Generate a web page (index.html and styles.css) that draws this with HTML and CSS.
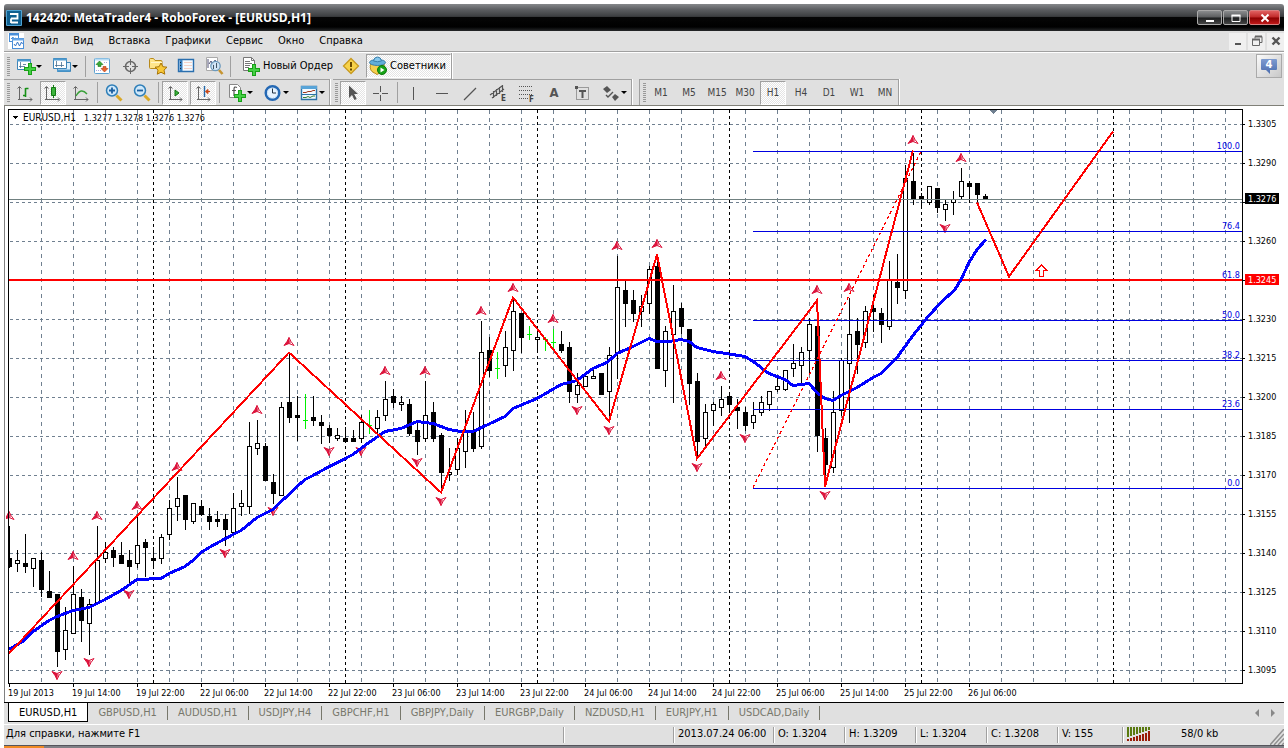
FILE: index.html
```html
<!DOCTYPE html>
<html lang="ru">
<head>
<meta charset="utf-8">
<title>142420: MetaTrader4 - RoboForex - [EURUSD,H1]</title>
<link rel="stylesheet" href="styles.css">
</head>
<body>
<div class="window">
  <header class="titlebar">
    <svg class="app-logo" width="16" height="16" viewBox="0 0 16 16"><rect width="16" height="16" rx="1" fill="#4fa3d3"/><rect x="1" y="1" width="14" height="14" fill="#0f5f8f"/><path d="M5 13V8.500M4 4h7.500v4.500H5M5 12.500h7" fill="none" stroke="#fff" stroke-width="1.800"/></svg>
    <h1>142420: MetaTrader4 - RoboForex - [EURUSD,H1]</h1>
    <div class="window-buttons">
      <button aria-label="Свернуть"><svg width="12" height="10"><path d="M2 8h8" stroke="#fff" stroke-width="2"/></svg></button>
      <button aria-label="Развернуть"><svg width="12" height="10"><path d="M2 2.500h8v6h-8z" fill="none" stroke="#fff"/><path d="M1.500 2.500h9" stroke="#fff" stroke-width="2"/></svg></button>
      <button class="close" aria-label="Закрыть"><svg width="12" height="10"><path d="M2.500 1.500l7 7m0-7l-7 7" stroke="#fff" stroke-width="2"/></svg></button>
    </div>
  </header>

  <nav class="menubar">
    <svg class="doc-icon" width="16" height="16" viewBox="0 0 16 16"><rect width="16" height="16" fill="#fff"/><rect x="1.500" y=".5" width="9" height="8" fill="#fff" stroke="#4a8fd8"/><path d="M1 1.500h10" stroke="#4a8fd8" stroke-width="2"/><path d="M3 6l2-2 1 2 2-1" fill="none" stroke="#4a8fd8"/><rect x="4.500" y="5.500" width="11" height="10" fill="#fff" stroke="#4a8fd8"/><path d="M4 6.500h12" stroke="#6aa8e8" stroke-width="2"/><path d="M6 11l1.500 2 2-4 2 4 2-4 1 2" fill="none" stroke="#3476c8"/></svg>
    <button>Файл</button><button>Вид</button><button>Вставка</button><button>Графики</button><button>Сервис</button><button>Окно</button><button>Справка</button>
    <div class="mdi-buttons">
      <button aria-label="Свернуть график"><svg width="12" height="12"><path d="M3 9h6" stroke="#555" stroke-width="2"/></svg></button>
      <button aria-label="Восстановить график"><svg width="12" height="12"><path d="M4 3.500V1.500h7v6h-2" fill="none" stroke="#666"/><path d="M4 1.500h7M1 4.500h8" stroke="#666" stroke-width="2"/><path d="M1.500 4.500h7v6h-7z" fill="none" stroke="#666"/></svg></button>
      <button aria-label="Закрыть график"><svg width="12" height="12"><path d="M2.500 2.500l7 7m0-7l-7 7" stroke="#555" stroke-width="2.400"/></svg></button>
    </div>
  </nav>

  <div class="toolbars">
    <div class="toolrow">
      <div class="group">
        <span class="grip"></span>
        <button class="drop" aria-label="Новый график"><svg width="20" height="20"><path d="M1.500 3.500h13v10h-13z" fill="#fff" stroke="#3d85b8"/><path d="M1 4.500h14" stroke="#4f9bd0" stroke-width="2"/><path d="M4.500 6v6M3 10.500h6M7 8.500h3" stroke="#456f90" stroke-width=".8"/><path d="M12 7h4v4h4v4h-4v4h-4v-4H8v-4h4z" fill="#17a017"/><path d="M13 8h2v4h4v2h-4v4h-2v-4H9v-2h4z" fill="#45cf45"/></svg><i></i></button>
        <button class="drop" aria-label="Профили"><svg width="20" height="20"><path d="M5.500 6.500h13v9h-13z" fill="#dceffc" stroke="#3d85b8"/><path d="M1.500 2.500h13v10h-13z" fill="#fff" stroke="#3d85b8"/><path d="M1 3.500h14" stroke="#4f9bd0" stroke-width="2"/><path d="M4.500 5v6M3 9.500h9M9.500 6v5" stroke="#456f90" stroke-width=".8"/><path d="M5 14.500h13" stroke="#4f9bd0" stroke-width="2"/></svg><i></i></button>
        <span class="sep"></span>
        <button aria-label="Обзор рынка"><svg width="20" height="20"><rect x="2.500" y="2.500" width="15" height="15" rx="1" fill="#fff" stroke="#5aa0d0"/><path d="M3 3.500h14" stroke="#b8dcf4" stroke-width="2"/><path d="M7.500 5l3.500 3.500H9v2H6v-2H4z" fill="#3aa83a" stroke="#187818" stroke-width=".6"/><path d="M12.500 16l3.500-3.500h-2v-2h-3v2H9z" fill="#e8642e" stroke="#b03a10" stroke-width=".6"/><path d="M4 14.500h5M12 6.500h4" stroke="#aad" stroke-dasharray="1 1"/></svg></button>
        <button aria-label="Окно данных"><svg width="20" height="20"><circle cx="10.500" cy="10.500" r="5" fill="none" stroke="#686868" stroke-width="1.600"/><path d="M10.500 3v6M10.500 12v6M3 10.500h6M12 10.500h6" stroke="#686868"/></svg></button>
        <button aria-label="Навигатор"><svg width="20" height="20"><path d="M1.500 3.500q0-1 1-1h3l1.500 2h6q1 0 1 1v6q0 1-1 1h-10.500q-1 0-1-1z" fill="#ffe58a" stroke="#b88a1c"/><path d="M3 6.500h11" stroke="#fff6cc"/><path d="M13 7l1.900 3.700 4.100.5-3 2.900.8 4.100-3.800-2-3.700 2 .7-4.100-3-2.900 4.100-.5z" fill="#f8c838" stroke="#a87404"/></svg></button>
        <button aria-label="Терминал"><svg width="20" height="20"><path d="M2.500 3.500h15v12h-15z" fill="#f4faff" stroke="#2a6fae" stroke-width="1.400"/><path d="M5 4v11" stroke="#377fc0" stroke-width="3"/><path d="M4.500 6v9" stroke="#123" stroke-dasharray="1 2"/><path d="M8 6.500h8M8 9.500h8M8 12.500h8" stroke="#f0c0b0" stroke-width=".7"/></svg></button>
        <button aria-label="Тестер стратегий"><svg width="20" height="20"><path d="M2.500 1.500h11v13h-11z" fill="#fff" stroke="#aaa"/><path d="M4 3v9M5 8l2-3 2 4 2-5 2 3" fill="none" stroke="#557"/><circle cx="11.500" cy="10" r="4.700" fill="#cfe6f7" fill-opacity=".9" stroke="#6b99bc" stroke-width="1.300"/><path d="M9.500 9v4M12.500 7v5" stroke="#456"/><path d="M15 14l3.500 4" stroke="#c69532" stroke-width="2.600"/></svg></button>
        <span class="sep"></span>
        <button class="text-btn"><svg width="20" height="20"><path d="M2.500 1.500h8l3 3v10h-11z" fill="#fff" stroke="#777"/><path d="M10.500 1.500v3h3M4 5.500h5M4 7.500h7M4 9.500h5M4 11.500h4" fill="none" stroke="#777"/><path d="M11 8h4v4h4v4h-4v4h-4v-4H7v-4h4z" fill="#17a017"/><path d="M12 9h2v4h4v2h-4v4h-2v-4H8v-2h4z" fill="#45cf45"/></svg>Новый Ордер</button>
        <button aria-label="MetaEditor"><svg width="20" height="20"><path d="M10 2.500l7.500 7.500-7.500 7.500-7.500-7.500z" fill="#f7d24a" stroke="#c89a20" stroke-width="1.300"/><path d="M10 6v5M10 12.500v2" stroke="#6a4a00" stroke-width="2"/></svg></button>
        <button class="text-btn pressed experts"><svg width="20" height="20"><path d="M3 7h13q1 6-3 9l-4 2.500-5-3q-3-3-1-8.500z" fill="#f5cf4e" stroke="#b88a1c"/><ellipse cx="9.500" cy="6.500" rx="8" ry="3" fill="#62aed9" stroke="#3a80ac"/><path d="M5.500 5q.5-4 4-4t4 4q-4 1.500-8 0z" fill="#85c7ec" stroke="#3a80ac"/><circle cx="14" cy="14" r="4.500" fill="#18a318" stroke="#0a7a0a"/><path d="M12.500 11.500v5l4-2.500z" fill="#fff"/></svg>Советники</button>
      </div>
      <button class="notice" aria-label="Уведомления"><svg width="20" height="20"><defs><linearGradient id="bub" x2="0" y2="1"><stop stop-color="#7e9bd0"/><stop offset="1" stop-color="#4a6cae"/></linearGradient></defs><path d="M3 3h14q1 0 1 1v9q0 1-1 1h-6v4l-4-4H3q-1 0-1-1V4q0-1 1-1z" fill="url(#bub)"/><text x="10" y="12" class="notice-num">4</text></svg></button>
    </div>

    <div class="toolrow">
      <div class="group lined">
        <span class="grip"></span>
        <button aria-label="Бары"><svg width="20" height="20"><path d="M4.500 16V4M3 16.500h14M2.500 5.500l2-2 2 2M15 14.500l2 2-2 2" fill="none" stroke="#666"/><path d="M10.500 5v9M10.500 5.500h3M8 12.500h2.500" stroke="#169016" stroke-width="1.600" fill="none"/></svg></button>
        <button class="pressed" aria-label="Свечи"><svg width="20" height="20"><path d="M3.500 16V4M2 16.500h14M1.500 5.500l2-2 2 2M15 14.500l2 2-2 2" fill="none" stroke="#666"/><path d="M10.500 2v13" stroke="#168016"/><path d="M8.500 4.500h4v8h-4z" fill="#3cb43c" stroke="#127812"/></svg></button>
        <button aria-label="Линия"><svg width="20" height="20"><path d="M4.500 16V4M3 16.500h14M2.500 5.500l2-2 2 2M15 14.500l2 2-2 2" fill="none" stroke="#666"/><path d="M5 13q5-9 11-2" fill="none" stroke="#38a038" stroke-width="1.400"/></svg></button>
        <span class="sep"></span>
        <button aria-label="Увеличить"><svg width="20" height="20"><path d="M12.500 12.500l5 5" stroke="#d9a828" stroke-width="3"/><circle cx="8" cy="7.500" r="5.500" fill="#cfe8fa" stroke="#2f7fb8" stroke-width="1.500"/><path d="M5 7.500h6M8 4.500v6" stroke="#1b5fa0" stroke-width="1.800"/></svg></button>
        <button aria-label="Уменьшить"><svg width="20" height="20"><path d="M12.500 12.500l5 5" stroke="#d9a828" stroke-width="3"/><circle cx="8" cy="7.500" r="5.500" fill="#cfe8fa" stroke="#2f7fb8" stroke-width="1.500"/><path d="M5 7.500h6" stroke="#1b5fa0" stroke-width="1.800"/></svg></button>
        <span class="sep"></span>
        <button class="pressed" aria-label="Автопрокрутка"><svg width="20" height="20"><path d="M5.500 16V4M4 16.500h13M3.500 5.500l2-2 2 2M15 14.500l2 2-2 2" fill="none" stroke="#666"/><path d="M10 7v6l4-3z" fill="#3ab83a" stroke="#107010"/></svg></button>
        <button class="pressed" aria-label="Сдвиг графика"><svg width="20" height="20"><path d="M5.500 16V4M4 16.500h13M3.500 5.500l2-2 2 2M15 14.500l2 2-2 2" fill="none" stroke="#666"/><path d="M11.500 3v11" stroke="#2468a8" stroke-width="1.400"/><path d="M17 8.500h-3M12.500 8.500l2.500-2v4z" fill="#c84818" stroke="#c84818"/></svg></button>
        <span class="sep"></span>
        <button class="drop" aria-label="Индикаторы"><svg width="20" height="20"><path d="M2.500 1.500h8l3 3v10h-11z" fill="#fff" stroke="#888"/><path d="M10 4.500q-3-1.500-3 1.500v7M5 7.500h4" fill="none" stroke="#555" stroke-width="1.200"/><path d="M11 7h4v4h4v4h-4v4h-4v-4H7v-4h4z" fill="#17a017"/><path d="M12 8h2v4h4v2h-4v4h-2v-4H8v-2h4z" fill="#45cf45"/></svg><i></i></button>
        <button class="drop" aria-label="Периоды"><svg width="20" height="20"><circle cx="9.500" cy="10" r="6.800" fill="#e6f3ff" stroke="#2468b4" stroke-width="2.400"/><circle cx="9.500" cy="10" r="5" fill="none" stroke="#a8cef0" stroke-dasharray="1 2"/><path d="M9.500 5.500V10H13" fill="none" stroke="#234"/></svg><i></i></button>
        <button class="drop" aria-label="Шаблоны"><svg width="20" height="20"><path d="M2.500 3.500h15v13h-15z" fill="#f4faff" stroke="#2c74a8" stroke-width="1.400"/><path d="M2 4.500h16" stroke="#58a4d8" stroke-width="3"/><path d="M2 11.500h16" stroke="#2c74a8"/><path d="M4 9.500h3l2-1h3l2-1h2" fill="none" stroke="#a03a20"/><path d="M4 14.500h3l2-1 2 1 3-1.500h2" fill="none" stroke="#338033"/></svg><i></i></button>
      </div>
      <div class="group lined">
        <span class="grip"></span>
        <button class="pressed" aria-label="Курсор"><svg width="20" height="20"><path d="M6 2.500v12.500l3-3 2.500 5 2.200-1-2.500-5H15z" fill="#555"/></svg></button>
        <button aria-label="Перекрестие"><svg width="20" height="20"><path d="M9.500 3v6M9.500 12v6M2 10.500h6M11 10.500h6" stroke="#555"/></svg></button>
        <span class="sep"></span>
        <button aria-label="Вертикальная линия"><svg width="20" height="20"><path d="M9.500 4v13" stroke="#555"/></svg></button>
        <button aria-label="Горизонтальная линия"><svg width="20" height="20"><path d="M4 10.500h12" stroke="#555"/></svg></button>
        <button aria-label="Трендовая линия"><svg width="20" height="20"><path d="M4 17L16 5" stroke="#555" stroke-width="1.200"/></svg></button>
        <button aria-label="Равноудаленный канал"><svg width="20" height="20"><path d="M2 12L14 3M4 15L16 6M5.500 8v7M8.500 6v7M11.500 4v7M14.500 2v7" stroke="#555" stroke-width="1.200"/><text x="13" y="18" class="glyph">E</text></svg></button>
        <button aria-label="Линии Фибоначчи"><svg width="20" height="20"><path d="M3 3.500h14M3 7.500h14M3 11.500h14M3 15.500h9" stroke="#555" stroke-dasharray="1 1"/><text x="13" y="19" class="glyph">F</text></svg></button>
        <button class="letter">A</button>
        <button aria-label="Текстовая метка"><svg width="20" height="20"><path d="M4.500 4.500h12v12h-12z" fill="none" stroke="#555" stroke-dasharray="1 1"/><path d="M3 3h3v3H3zM7 7h7v2h-2.500v6h-2V9H7z" fill="#555"/></svg></button>
        <button class="drop" aria-label="Стрелки"><svg width="20" height="20"><path d="M6 3l4 4-4 3-4-4zM14 11l4 3-4 4-3-4z" fill="#555"/><path d="M5 12l2 2 5-5" fill="none" stroke="#555" stroke-width="1.400"/></svg><i></i></button>
      </div>
      <div class="group lined periods">
        <span class="grip"></span>
        <button>M1</button><button>M5</button><button>M15</button><button>M30</button><button class="pressed">H1</button><button>H4</button><button>D1</button><button>W1</button><button>MN</button>
      </div>
    </div>
  </div>

  <main class="chart-frame">
    <svg id="chart" class="chart" viewBox="6 108 1276 594" role="img" aria-label="EURUSD,H1"></svg>
  </main>

  <nav class="tabs">
    <a href="#eurusd" class="active">EURUSD,H1</a><a href="#gbpusd">GBPUSD,H1</a><a href="#audusd">AUDUSD,H1</a><a href="#usdjpy">USDJPY,H4</a><a href="#gbpchf">GBPCHF,H1</a><a href="#gbpjpy">GBPJPY,Daily</a><a href="#eurgbp">EURGBP,Daily</a><a href="#nzdusd">NZDUSD,H1</a><a href="#eurjpy">EURJPY,H1</a><a href="#usdcad">USDCAD,Daily</a>
    <div class="tab-scroll">
      <button aria-label="Назад"><svg width="6" height="8"><path d="M5 0v8L1 4z" fill="#888"/></svg></button>
      <button aria-label="Вперед"><svg width="6" height="8"><path d="M1 0v8l4-4z" fill="#888"/></svg></button>
    </div>
  </nav>

  <footer class="status">
    <span class="help">Для справки, нажмите F1</span>
    <span class="profile"></span>
    <span class="date">2013.07.24 06:00</span>
    <span>O: 1.3204</span><span>H: 1.3209</span><span>L: 1.3204</span><span>C: 1.3208</span><span class="volume">V: 155</span>
    <span class="link"><svg width="24" height="14" viewBox="0 0 24 14"><path d="M1 0v10M4 0v9M7 0v8M10 0v7M13 0v6M16 0v5M19 0v4M22 0v3" stroke="#5a7a10" stroke-width="2"/><path d="M1 12v2M4 11v3M7 10v4M10 9v5M13 8v6M16 7v7M19 6v8M22 4v10" stroke="#9a1c08" stroke-width="2"/></svg>58/0 kb</span>
    <svg class="resize" width="14" height="16"><path d="M0 16L14 0M4 16L14 5M8 16L14 9.500M12 16l2-2" stroke="#909090" stroke-width="1.500"/></svg>
  </footer>
  <div class="taskbar"><span></span></div>
</div>
<script src="chart.js"></script>
</body>
</html>
```
FILE: styles.css
```css
* { box-sizing: border-box; }
body {
  margin: 0;
  background: #fff;
  color: #000;
  font: 11px/14px "DejaVu Sans Condensed", "DejaVu Sans", sans-serif;
}
button {
  margin: 0;
  padding: 0;
  border: 0;
  background: none;
  color: inherit;
  font: inherit;
}
svg { display: block; flex: none; }
.window {
  display: flex;
  flex-direction: column;
  min-height: 100vh;
  padding: 4px 4px 0;
}

.titlebar {
  display: flex;
  align-items: center;
  height: 27px;
  padding: 0 4px 0 2px;
  gap: 4px;
  border-radius: 3px 3px 0 0;
  background: linear-gradient(#85878a 0, #5d5f62 20%, #3c3e40 46%, #060606 50%, #000 85%, #26282a 100%);
}
.titlebar h1 {
  margin: 0;
  color: #fff;
  font: bold 12px/16px "Open Sans", "Noto Sans", sans-serif;
}
.window-buttons { display: flex; gap: 1px; margin-left: auto; }
.window-buttons button {
  display: flex;
  align-items: center;
  justify-content: center;
  width: 25px;
  height: 15px;
  border: 1px solid #aaa;
  border-radius: 2px;
  background: linear-gradient(#8a8c8e 0, #5b5d5f 48%, #1d1f20 52%, #444 100%);
}
.window-buttons .close {
  width: 31px;
  border-color: #d98080;
  background: linear-gradient(#e06060 0, #c02828 48%, #8a0000 52%, #c01818 100%);
}

.menubar {
  display: flex;
  align-items: center;
  height: 21px;
  padding-left: 4px;
  border-bottom: 1px solid #a0a0a0;
  background: #e0e0e0;
}
.menubar > button { padding: 0 8px 0 7px; }
.mdi-buttons { display: flex; gap: 2px; margin-left: auto; }
.mdi-buttons button {
  display: flex;
  align-items: center;
  justify-content: center;
  width: 17px;
  height: 17px;
  background: #f0f0f0;
}

.toolbars {
  height: 54px;
  border-top: 1px solid #fff;
  border-bottom: 1px solid #808078;
  background: #e0e0e0;
}
.toolrow { display: flex; height: 26px; gap: 3px; }
.group {
  display: flex;
  align-items: center;
  gap: 2px;
  padding-left: 3px;
  border-right: 1px solid #a0a0a0;
  box-shadow: 1px 0 #fff;
}
.group.lined { border-top: 1px solid #a0a0a0; }
.group + .group { padding-left: 2px; }
.grip {
  width: 3px;
  height: 19px;
  background: repeating-linear-gradient(#999 0 1px, #e0e0e0 1px 2px);
}
.sep { width: 1px; height: 21px; margin: 0 1px; background: #a0a0a0; }
.group button {
  display: flex;
  align-items: center;
  justify-content: center;
  width: 26px;
  height: 24px;
}
.group .drop { width: 34px; }
.drop i {
  border: 3px solid transparent;
  border-top-color: #000;
  border-bottom: 0;
}
.group .text-btn { width: auto; padding: 0 3px 0 7px; gap: 2px; }
.group .experts { padding: 0 4px 0 1px; }
.group .pressed {
  border: 1px solid;
  border-color: #a0a0a0 #fff #fff #a0a0a0;
  background: repeating-conic-gradient(#fff 0 25%, #e4e4e4 0 50%) 0 0 / 2px 2px;
}
.group .letter { color: #555; font: bold 13px/16px "DejaVu Sans Condensed", sans-serif; }
.glyph { fill: #444; font: bold 8px "DejaVu Sans Condensed", sans-serif; }
.group.periods { margin-left: 4px; padding-left: 3px; border-left: 1px solid #a0a0a0; }
.periods button { color: #444; font-size: 10px; }
.notice {
  width: 26px;
  height: 24px;
  margin: 1px 2px 0 auto;
  padding: 1px 2px;
  border: 1px solid #aaa;
  background: linear-gradient(135deg, #fafafa, #c8c8c8);
}
.notice-num { fill: #fff; font: bold 10px "DejaVu Sans", sans-serif; text-anchor: middle; }

.chart-frame {
  flex: 1;
  display: flex;
  padding: 1px 2px 0 1px;
  border-left: 1px solid #808080;
  background: #fff;
  min-height: 0;
}
.chart { width: 100%; height: auto; shape-rendering: crispEdges; }
.chart text { font: 9px "DejaVu Sans Condensed", sans-serif; }
.chart .caption { font-size: 10px; }
.chart .fib-label { fill: #0000e0; text-anchor: end; }
.chart .tag { fill: #fff; }

.tabs {
  display: flex;
  align-items: flex-start;
  height: 22px;
  padding-left: 4px;
  border-top: 1px solid #000;
  background: #e0e0e0;
}
.tabs a {
  height: 14px;
  margin-top: 3px;
  padding: 0 10px;
  border-right: 1px solid #77776b;
  color: #77776b;
  text-decoration: none;
}
.tabs .active {
  height: 19px;
  margin-top: 0;
  padding-top: 3px;
  border: 1px solid #000;
  border-top: 0;
  background: #fff;
  color: #000;
}
.tab-scroll { display: flex; gap: 10px; margin: 6px 8px 0 auto; }

.status {
  display: flex;
  align-items: center;
  height: 21px;
  border-top: 1px solid #fff;
  background: #e0e0e0;
}
.status > span {
  width: 71px;
  height: 16px;
  padding-left: 4px;
  border-left: 1px solid #a0a0a0;
  box-shadow: inset 1px 0 #fff;
  white-space: nowrap;
}
.status .help { flex: 1; padding-left: 2px; border: 0; box-shadow: none; }
.status .profile { width: 110px; }
.status .date { width: 100px; }
.status .volume { width: 65px; }
.status .link { display: flex; width: 148px; gap: 30px; }
.resize { align-self: flex-end; }
.taskbar { height: 3px; background: #808086; border-top: 1px solid #55555c; }
.taskbar span { display: block; width: 40px; height: 2px; background: #f08a24; }
```
FILE: chart.js
```js
const NS = 'http://www.w3.org/2000/svg';
const chart = document.getElementById('chart');

function add(tag, attrs, text) {
  const node = document.createElementNS(NS, tag);
  for (const key in attrs) node.setAttribute(key, attrs[key]);
  if (text) node.textContent = text;
  chart.appendChild(node);
}

const LEFT = 9, RIGHT = 1242, TOP = 110, BOTTOM = 683;

// Grid
for (let y = 124; y < BOTTOM; y += 39)
  add('path', { d: `M${LEFT + 1} ${y + 0.5}H${RIGHT}`, stroke: '#708090', 'stroke-dasharray': '3 3' });
for (let x = 41; x < RIGHT; x += 32)
  add('path', { d: `M${x + 0.5} ${TOP}V${BOTTOM}`, stroke: '#708090', 'stroke-dasharray': '4 4' });
for (let x = 153; x < RIGHT; x += 192)
  add('path', { d: `M${x + 0.5} ${TOP}V${BOTTOM}`, stroke: '#000', 'stroke-dasharray': '3 3' });

// Candles: high, low, body top, body bottom, kind (b = bear, w = bull, g = doji)
const candles = `526 568 558 567 b|550 572 560 564 w|534 573 563 567 b|558 587 558 569 w|552 597 560 590 b|571 598 591 598 b
594 667 594 652 b|607 660 630 650 w|566 634 594 634 w|589 642 597 621 b|599 655 604 624 w|526 603 560 603 w
542 563 552 559 w|547 567 550 558 b|542 564 555 564 b|550 584 560 567 b|517 568 545 564 w|539 577 542 548 b
547 568 558 561 b|534 564 537 559 w|500 540 508 535 w|477 521 498 507 w|495 530 495 520 b|503 524 503 522 w
500 516 506 515 b|508 530 516 522 b|511 527 519 522 b|514 546 519 530 b|493 532 508 533 w|490 516 503 507 w
422 514 446 507 w|420 455 443 449 w|443 481 446 481 b|474 504 482 494 b|402 496 407 496 w|353 423 402 418 b
396 441 415 418 b|394 429 420 421 g|396 426 417 421 b|415 444 422 426 b|425 443 428 436 b|428 441 435 439 w
427 441 438 442 b|430 441 438 442 b|415 443 422 439 w|410 434 425 426 g|410 433 417 429 w|381 421 399 416 w
389 408 396 403 b|396 411 402 405 w|399 436 404 434 b|420 455 430 442 b|381 442 415 439 w|402 442 412 439 b
433 492 435 473 b|448 481 472 475 w|438 475 448 470 w|410 468 430 452 w|412 452 432 449 b|321 449 352 447 w
337 377 350 371 b|352 379 368 369 g|331 377 347 366 w|300 371 311 351 w|313 353 313 338 b|326 340 334 335 g
330 353 337 340 w|337 351 339 340 g|329 349 342 343 g|331 353 344 351 b|342 403 347 392 b|373 403 385 395 w
375 387 376 387 w|370 379 376 379 w|373 395 373 395 b|347 417 355 392 w|256 379 287 353 w|281 327 290 304 b
290 322 300 314 b|295 327 306 312 w|266 314 269 304 w|258 369 266 369 b|326 387 331 371 w|285 403 311 335 w
303 334 308 327 b|329 405 329 384 b|373 457 381 442 b|404 447 412 439 w|402 426 404 411 w|386 416 399 408 w
392 412 396 405 b|399 429 407 411 b|407 431 412 426 b|402 429 415 423 w|396 416 402 413 w|391 411 391 405 w
375 392 386 390 w|370 391 370 390 w|344 377 363 369 w|347 385 352 366 w|318 375 324 351 w|320 452 326 436 b
428 480 438 465 b|391 473 412 468 w|358 416 360 411 w|298 423 334 364 w|318 374 331 345 b|306 348 311 343 w
295 332 308 312 b|308 343 313 325 b|261 330 280 327 w|254 304 282 288 b|165 299 178 291 w|153 205 181 200 b
193 207 196 200 b|186 205 186 203 w|188 213 188 208 b|199 221 204 210 w|191 215 199 203 w|168 200 181 197 w
181 203 183 187 b|183 202 183 195 b|194 200 196 200 b`;
candles.split(/[|\n]/).forEach((row, i) => {
  const [high, low, top, bottom, kind] = row.split(' ');
  const x = LEFT + i * 8;
  const color = kind === 'g' ? '#00f000' : '#000';
  add('path', { d: `M${x + 0.5} ${high}V${low}`, stroke: color });
  if (kind === 'g') add('rect', { x: x - 2, y: top, width: 5, height: 1, fill: color });
  else if (kind === 'b') add('rect', { x: x - (i ? 2 : 0), y: top, width: i ? 5 : 3, height: bottom - top });
  else add('rect', { x: x - 1.5, y: +top + 0.5, width: 4, height: bottom - top - 1, fill: '#fff', stroke: '#000' });
});

// Fractal markers
const up = '9 516,73 556,97 516,137 506,177 467,257 410,289 342,385 371,425 371,481 311,513 288,553 319,617 246,657 244,721 376,817 290,849 288,913 140,961 158';
const down = '57 676,89 663,129 595,225 554,273 512,329 452,361 452,417 463,441 502,577 411,609 431,697 468,745 439,825 496,945 229';
const fractal = (list, flip) => list.split(',').forEach(p => {
  add('path', {
    d: 'M0 -4L-2 0L-5 4L0 2Z',
    fill: '#dc143c', stroke: '#dc143c', 'stroke-width': 1, 'shape-rendering': 'auto',
    transform: `translate(${p}) scale(1 ${flip})`
  });
  add('path', {
    d: 'M0 -4L2 0L5 4L0 2M1 -1V2', fill: 'none', stroke: '#dc143c', 'shape-rendering': 'auto',
    transform: `translate(${p}) scale(1 ${flip})`
  });
});
fractal(up, 1);
fractal(down, -1);

// Price and level lines
add('path', { d: `M${LEFT} 199.5H${RIGHT}`, stroke: '#708080' });
for (const [y, name] of [[151, '100.0'], [231, '76.4'], [320, '50.0'], [360, '38.2'], [409, '23.6'], [488, '0.0']]) {
  add('path', { d: `M753 ${y + 0.5}H${RIGHT}`, stroke: '#0000e0' });
  add('text', { x: 1240, y: y - 2, class: 'fib-label' }, name);
}
add('path', { d: 'M753 488L921 152', stroke: '#f00', 'stroke-dasharray': '3 3' });
add('path', { d: `M${LEFT} 280H${RIGHT}`, stroke: '#f00', 'stroke-width': 2 });
add('text', { x: 1240, y: 278, class: 'fib-label' }, '61.8');

// Moving average
add('polyline', {
  points: '9,650 24,641 33,632 49,621 57,617 73,611 89,608 105,600 121,591 137,580 161,579 169,574 185,567 193,561 201,553 209,548 233,535 241,531 257,518 273,510 281,502 289,495 297,487 305,480 313,476 320,472 353,455 369,443 385,432 401,429 417,422 433,424 449,430 461,432 473,432 505,417 513,409 537,399 561,385 577,381 593,369 607,363 617,354 633,347 649,339 657,342 669,342 681,340 689,342 697,348 713,352 745,357 753,362 769,374 785,380 793,386 809,384 817,393 825,399 833,401 841,396 857,388 873,378 881,374 897,358 905,347 913,336 929,316 941,303 955,290 961,280 969,263 977,250 986,240',
  fill: 'none', stroke: '#00f', 'stroke-width': 3
});

// Zigzag and forecast
for (const points of [
  '9,654 289,353 441,493 513,298 609,422 657,255 697,459 817,301 825,487 913,151',
  '977,203 1009,277 1113,132'
]) add('polyline', { points, fill: 'none', stroke: '#f00', 'stroke-width': 2 });
add('path', { d: 'M1041.500 265.500L1046.500 270.500H1043.500V276.500H1039.500V270.500H1036.500Z', fill: '#fff', stroke: '#f00' });
add('path', { d: 'M989 110H998L993.500 115Z', fill: '#708090' });

// Frame and axes
add('path', { d: `M${LEFT - 0.5} 109.500H${RIGHT + 0.5}V${BOTTOM + 0.5}H${LEFT - 0.5}Z`, fill: 'none', stroke: '#000' });
for (let i = 0, y = 124; y < BOTTOM; i++, y += 39) {
  add('path', { d: `M${RIGHT} ${y + 0.5}H${RIGHT + 3}`, stroke: '#000' });
  // Rows under the price tags stay unlabelled
  if (y !== 280 && y !== 202) add('text', { x: 1248, y: y + 3 }, (1.3305 - i * 0.0015).toFixed(4));
}
for (const [y, color, value] of [[193, '#000', '1.3276'], [274, '#f00', '1.3245']]) {
  add('rect', { x: 1245, y, width: 34, height: 11, fill: color });
  add('text', { x: 1248, y: y + 9, class: 'tag' }, value);
}
const times = ['19 Jul 2013', '19 Jul 14:00', '19 Jul 22:00'];
for (const day of [22, 23, 24, 25]) times.push(`${day} Jul 06:00`, `${day} Jul 14:00`, `${day} Jul 22:00`);
times.push('26 Jul 06:00');
times.forEach((label, i) => {
  const x = LEFT + i * 64;
  add('path', { d: `M${x + 0.5} ${BOTTOM}V${BOTTOM + 4}`, stroke: '#000' });
  add('text', { x: x - 1, y: 696 }, label);
});

// Symbol caption
add('path', { d: 'M12 116H19L15.500 120Z' });
add('text', { x: 23, y: 121, class: 'caption' }, 'EURUSD,H1');
add('text', { x: 84, y: 121 }, '1.3277 1.3278 1.3276 1.3276');
```
